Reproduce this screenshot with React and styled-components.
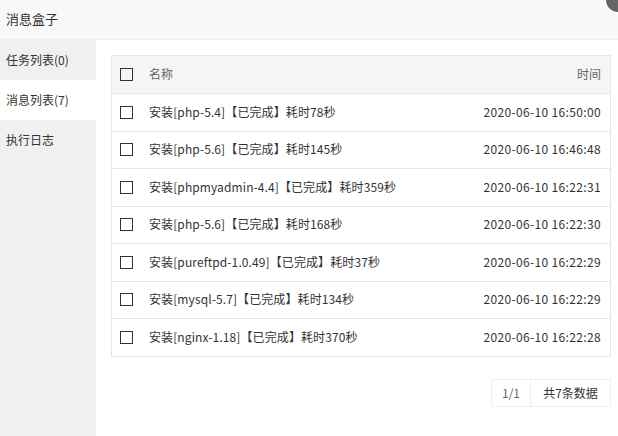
import React from 'react';
import styled, { createGlobalStyle } from 'styled-components';

const GlobalStyle = createGlobalStyle`
  html, body { margin: 0; padding: 0; background: #fff; }
  body { font-family: "Noto Sans CJK SC", "Noto Sans", sans-serif; font-size: 12px; color: #333; }
  * { box-sizing: border-box; }
`;

const Layer = styled.div`
  position: relative;
  width: 618px;
  height: 436px;
  display: flex;
  flex-direction: column;
  overflow: hidden;
`;

const Title = styled.div`
  height: 40px;
  line-height: 38px;
  padding-left: 6px;
  font-size: 13px;
  color: #333;
  background: #f8f8f8;
  border-bottom: 1px solid #eee;
`;

const CloseDot = styled.span`
  position: absolute;
  top: -12px;
  right: -12px;
  width: 24px;
  height: 24px;
  border-radius: 50%;
  background: #666;
  box-shadow: 0 0 0 2px #fff;
`;

const Body = styled.div`
  flex: 1;
  display: flex;
`;

const Side = styled.ul`
  width: 96px;
  margin: 0;
  padding: 0;
  list-style: none;
  background: #f0f0f0;
`;

const SideItem = styled.li`
  height: 40px;
  line-height: 39px;
  padding-left: 6px;
  font-size: 12px;
  color: #333;
  background: ${p => (p.$active ? '#fff' : 'transparent')};
`;

const Main = styled.div`
  flex: 1;
  padding: 15px 7px 0 15px;
  display: flex;
  flex-direction: column;
`;

const Table = styled.div`
  border: 1px solid #e6e6e6;
`;

const Row = styled.div`
  display: flex;
  align-items: center;
  height: ${p => (p.$head ? '37px' : '37.5px')};
  padding: 0 9px 2px 8px;
  background: ${p => (p.$head ? '#f5f5f5' : '#fff')};
  color: ${p => (p.$head ? '#666' : '#333')};
  border-top: ${p => (p.$first ? 'none' : '1px solid #e6e6e6')};
`;

const Check = styled.span`
  width: 13px;
  height: 13px;
  margin-top: 2px;
  border: 1px solid #333;
  flex: none;
  margin-right: 16px;
`;

const Name = styled.span`
  flex: 1;
  letter-spacing: 0.1px;
`;

const Time = styled.span`
  text-align: right;
  letter-spacing: ${p => (p.$head ? '0' : '0.35px')};
`;

const Pager = styled.div`
  align-self: flex-end;
  display: flex;
  margin-top: 22px;
  border: 1px solid #eee;
  height: 28px;
`;

const PageCell = styled.span`
  width: ${p => p.$w}px;
  text-align: center;
  line-height: 25px;
  font-size: 12px;
  color: ${p => (p.$muted ? '#666' : '#333')};
  border-left: ${p => (p.$split ? '1px solid #eee' : 'none')};
`;

const rows = [
  ['安装[php-5.4]【已完成】耗时78秒', '2020-06-10 16:50:00'],
  ['安装[php-5.6]【已完成】耗时145秒', '2020-06-10 16:46:48'],
  ['安装[phpmyadmin-4.4]【已完成】耗时359秒', '2020-06-10 16:22:31'],
  ['安装[php-5.6]【已完成】耗时168秒', '2020-06-10 16:22:30'],
  ['安装[pureftpd-1.0.49]【已完成】耗时37秒', '2020-06-10 16:22:29'],
  ['安装[mysql-5.7]【已完成】耗时134秒', '2020-06-10 16:22:29'],
  ['安装[nginx-1.18]【已完成】耗时370秒', '2020-06-10 16:22:28'],
];

export default function App() {
  return (
    <Layer>
      <GlobalStyle />
      <Title>消息盒子</Title>
      <CloseDot />
      <Body>
        <Side>
          <SideItem>任务列表(0)</SideItem>
          <SideItem $active>消息列表(7)</SideItem>
          <SideItem>执行日志</SideItem>
        </Side>
        <Main>
          <Table>
            <Row $head $first>
              <Check />
              <Name>名称</Name>
              <Time $head>时间</Time>
            </Row>
            {rows.map(([name, time], i) => (
              <Row key={i}>
                <Check />
                <Name>{name}</Name>
                <Time>{time}</Time>
              </Row>
            ))}
          </Table>
          <Pager>
            <PageCell $w={38} $muted>1/1</PageCell>
            <PageCell $w={80} $split>共7条数据</PageCell>
          </Pager>
        </Main>
      </Body>
    </Layer>
  );
}
